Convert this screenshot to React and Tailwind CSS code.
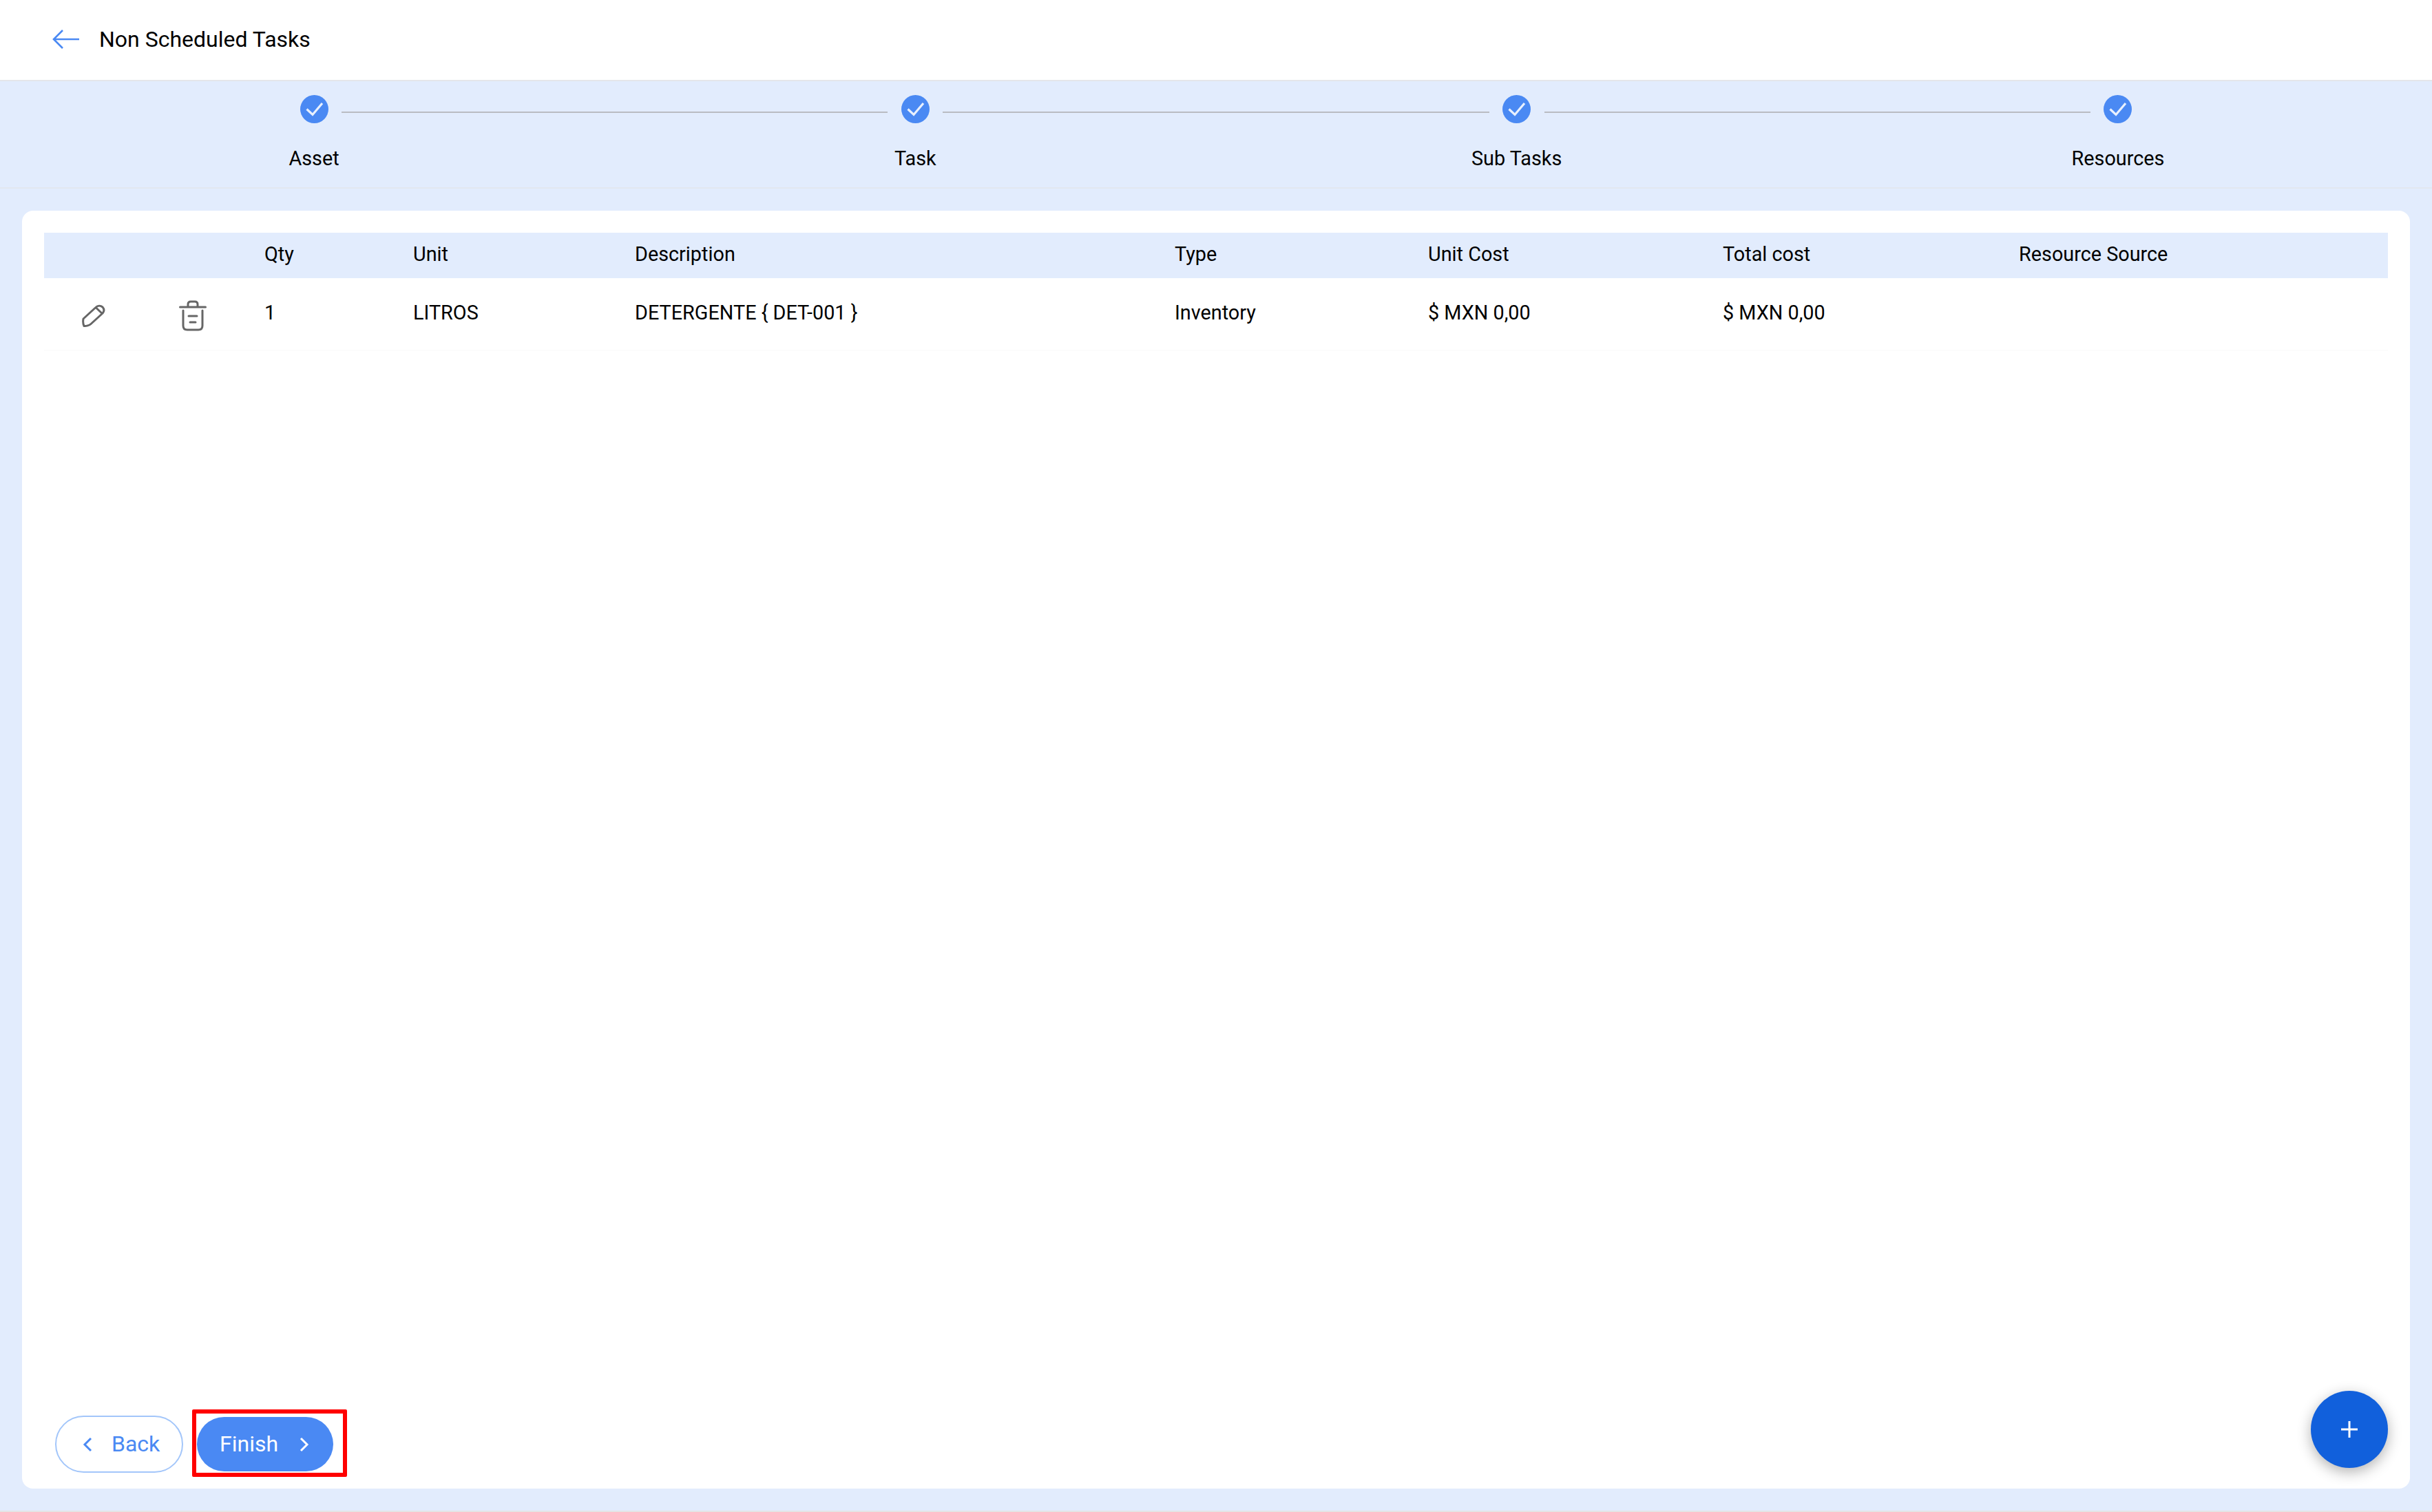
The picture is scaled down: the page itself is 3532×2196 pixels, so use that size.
import React from "react";

const steps = ["Asset", "Task", "Sub Tasks", "Resources"];
const cols = "grid grid-cols-[320px_216px_322px_784px_368px_428px_430px_1fr]";
const headers = ["", "Qty", "Unit", "Description", "Type", "Unit Cost", "Total cost", "Resource Source"];

function Check() {
  return (
    <svg width="41" height="41" viewBox="0 0 41 41" className="block">
      <circle cx="20.5" cy="20.5" r="20.5" fill="#4a89f3" />
      <path d="M9.5 20.5L18 28.5L32 12" fill="none" stroke="#e8f0fe" strokeWidth="3.2" />
    </svg>
  );
}

function Step({ label }) {
  return (
    <div className="relative w-20 shrink-0 flex flex-col items-center">
      <div className="h-[41px] w-[41px]"><Check /></div>
      <div className="mt-[31px] text-[28.8px] leading-[40px] text-black whitespace-nowrap">{label}</div>
    </div>
  );
}

export default function App() {
  return (
    <div className="h-[2196px] w-[3532px] flex flex-col bg-[#e2ecfd] border-b-2 border-[#e4e4e4] font-['Roboto',sans-serif] overflow-hidden">
      <header className="h-[118px] shrink-0 bg-white border-b-2 border-[#e4e6ea] flex items-center pl-[76px]">
        <svg width="40" height="30" viewBox="0 0 40 30" fill="none" stroke="#4a89f3" strokeWidth="2.6" className="mb-[2px]">
          <path d="M39 15H3M15 2L2 15L15 28" />
        </svg>
        <span className="ml-[28px] text-[32px] leading-[40px] text-black mb-[3px]">Non Scheduled Tasks</span>
      </header>

      <nav className="h-[156px] shrink-0 border-b-2 border-[#e2e7f0] pt-[20px] px-[416px] flex items-start">
        {steps.map((s, i) => (
          <React.Fragment key={s}>
            <Step label={s} />
            {i < steps.length - 1 && <div className="flex-1 h-[2px] bg-[#b9bcc2] mt-[24px]" />}
          </React.Fragment>
        ))}
      </nav>

      <main className="relative mx-[32px] mt-[32px] h-[1856px] bg-white rounded-[16px] flex flex-col p-[32px] pb-[23px]">
        <div className={`${cols} h-[66px] items-center bg-[#e2ecfd] text-[28.8px] text-black leading-[40px]`}>
          {headers.map((h, i) => <div key={i} className="pb-[5px]">{h}</div>)}
        </div>
        <div className={`${cols} h-[106px] items-center text-[28.8px] text-black leading-[40px] border-b-2 border-[#fcfcfc]`}>
          <div className="flex items-center pb-[1px]">
            <svg width="34" height="34" viewBox="0 0 34 34" fill="none" stroke="#666" strokeWidth="3" strokeLinejoin="round" className="ml-[55px] mt-[6px]">
              <path d="M2 21L20 4.500C23 1.500 27 1.500 30 4C32.500 6.800 32.500 10 30 13L13 28.500C11 30.500 6 32 3 31.500C1.800 29 1.500 24 2 21Z" />
              <path d="M20 4.500L29.500 13.500" />
            </svg>
            <svg width="40" height="45" viewBox="0 0 40 45" fill="none" stroke="#666" strokeWidth="3" strokeLinecap="round" strokeLinejoin="round" className="ml-[107px] mt-[6px]">
              <path d="M1.500 10H38.500M13 10V6Q13 2 17 2H23Q27 2 27 6V10" />
              <path d="M6 15V37Q6 43 12 43H28Q34 43 34 37V15" />
              <path d="M14 23H26M16 32H24" />
            </svg>
          </div>
          <div className="pb-[4px]">1</div>
          <div className="pb-[4px]">LITROS</div>
          <div className="pb-[4px]">DETERGENTE {"{"} DET-001 {"}"}</div>
          <div className="pb-[4px]">Inventory</div>
          <div className="pb-[4px]">$ MXN 0,00</div>
          <div className="pb-[4px]">$ MXN 0,00</div>
          <div />
        </div>

        <div className="flex-1" />

        <div className="flex items-center pl-[16px] gap-[20px]">
          <button className="h-[83px] w-[186px] rounded-full border-2 border-[#a3c6fa] bg-white text-[#4a89f3] text-[32px] flex items-center pl-[38px]">
            <svg width="14" height="22" viewBox="0 0 14 22" fill="none" stroke="#4a89f3" strokeWidth="3"><path d="M12 2L3 11L12 20" /></svg>
            <span className="ml-[28px] mb-[1px]">Back</span>
          </button>
          <div className="relative">
            <button className="h-[79px] w-[198px] rounded-full bg-[#4a89f3] text-white text-[32px] flex items-center pl-[33px]">
              <span className="mb-[1px]">Finish</span>
              <svg width="14" height="22" viewBox="0 0 14 22" fill="none" stroke="#fff" strokeWidth="3" className="ml-[31px]"><path d="M2 2L11 11L2 20" /></svg>
            </button>
            <div className="absolute -left-[7px] -right-[20px] -top-[11px] -bottom-[8px] border-[6px] border-[#ff0000] rounded-[2px] pointer-events-none" />
          </div>
        </div>

        <button className="absolute right-[32px] bottom-[30px] h-[112px] w-[112px] rounded-full bg-[#1160dc] flex items-center justify-center shadow-[0_6px_20px_rgba(0,0,0,0.3)]">
          <svg width="24" height="24" viewBox="0 0 24 24" stroke="#fff" strokeWidth="3"><path d="M12 0V24M0 12H24" /></svg>
        </button>
      </main>
    </div>
  );
}
